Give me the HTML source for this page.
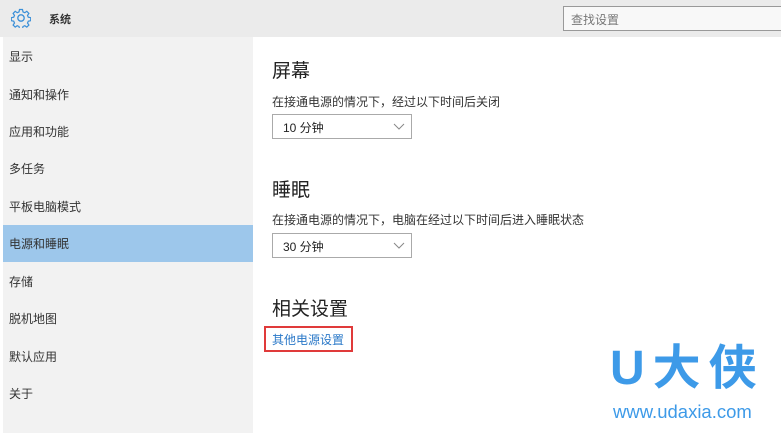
<!DOCTYPE html>
<html><head><meta charset="utf-8"><style>
*{margin:0;padding:0;box-sizing:border-box}
body{width:781px;height:433px;overflow:hidden;background:#fff;font-family:"Liberation Sans","Noto Sans CJK SC",sans-serif;color:#222;position:relative}
.hdr{position:absolute;left:0;top:0;width:781px;height:37px;background:#ebebeb}
.side{position:absolute;left:3px;top:37px;width:250px;height:396px;background:#f2f2f2}
.it{position:absolute;left:9px;font-size:12px;color:#333}
.sel{position:absolute;left:3px;top:225px;width:250px;height:37px;background:#9dc7eb}
.a{position:absolute;font-size:12px;color:#333}
.h{position:absolute;font-size:19px;color:#222}
.dd{position:absolute;left:272px;width:140px;height:25px;border:1px solid #aaa;background:#fff;font-size:12px;padding:4px 0 0 10px}
.dd svg{position:absolute;right:6px;top:8px}
</style></head><body>
<div class="hdr"></div>
<svg style="position:absolute;left:11px;top:8px" width="20" height="20" viewBox="0 0 20 20"><circle cx="10" cy="10" r="3.2" fill="none" stroke="#3a8fd8" stroke-width="1.3"/><path d="M8.5 1.5h3l.5 2.4 1.8.8 2-1.4 2.1 2.1-1.4 2 .8 1.8 2.4.5v3l-2.4.5-.8 1.8 1.4 2-2.1 2.1-2-1.4-1.8.8-.5 2.4h-3l-.5-2.4-1.8-.8-2 1.4-2.1-2.1 1.4-2-.8-1.8-2.4-.5v-3l2.4-.5.8-1.8-1.4-2 2.1-2.1 2 1.4 1.8-.8z" fill="none" stroke="#3a8fd8" stroke-width="1.2"/></svg>
<div class="a" style="left:49px;top:11px;font-size:11px;font-weight:bold;color:#333">系统</div>
<div style="position:absolute;left:563px;top:6px;width:220px;height:25px;border:1px solid #999;background:#f8f8f8;font-size:12px;color:#777;padding:4px 7px">查找设置</div>
<div class="side"></div>
<div class="sel"></div>
<div class="it" style="top:48px">显示</div>
<div class="it" style="top:86px">通知和操作</div>
<div class="it" style="top:123px">应用和功能</div>
<div class="it" style="top:160px">多任务</div>
<div class="it" style="top:198px">平板电脑模式</div>
<div class="it" style="top:235px">电源和睡眠</div>
<div class="it" style="top:273px">存储</div>
<div class="it" style="top:310px">脱机地图</div>
<div class="it" style="top:348px">默认应用</div>
<div class="it" style="top:385px">关于</div>
<div class="h" style="left:272px;top:56px">屏幕</div>
<div class="a" style="left:272px;top:93px">在接通电源的情况下，经过以下时间后关闭</div>
<div class="dd" style="top:114px">10 分钟<svg width="12" height="8"><path d="M1 1l5 5 5-5" fill="none" stroke="#888"/></svg></div>
<div class="h" style="left:272px;top:175px">睡眠</div>
<div class="a" style="left:272px;top:211px">在接通电源的情况下，电脑在经过以下时间后进入睡眠状态</div>
<div class="dd" style="top:233px">30 分钟<svg width="12" height="8"><path d="M1 1l5 5 5-5" fill="none" stroke="#888"/></svg></div>
<div class="h" style="left:272px;top:294px">相关设置</div>
<div style="position:absolute;left:264px;top:326px;width:89px;height:26px;border:2px solid #e03a3a"></div>
<div class="a" style="left:272px;top:331px;color:#2a78c8">其他电源设置</div>
<div style="position:absolute;left:610px;top:345px;font-size:48px;font-weight:bold;color:#3d9ae8;letter-spacing:8px;line-height:1">U大侠</div>
<div style="position:absolute;left:613px;top:403px;font-size:18.5px;color:#3d9ae8;line-height:1">www.udaxia.com</div>
</body></html>
